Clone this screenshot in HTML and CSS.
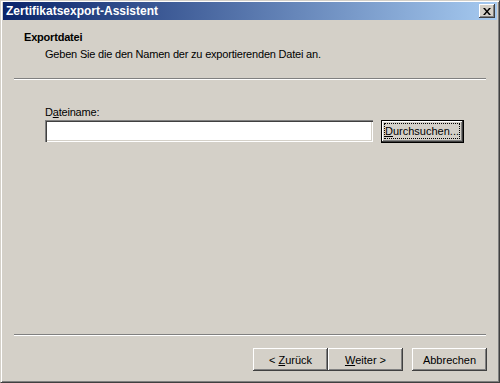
FILE: index.html
```html
<!DOCTYPE html>
<html lang="de">
<head>
    <meta charset="UTF-8">
    <title>Zertifikatsexport-Assistent</title>
    <link rel="stylesheet" href="styles.css">
</head>
<body>
    <div class="window">
        <div class="titlebar">
            <span class="title">Zertifikatsexport-Assistent</span>
            <button class="close" type="button">
                <svg width="8" height="7" viewBox="0 0 8 7"><path d="M0 0h2l2 2.5L6 0h2L5 3.5 8 7H6L4 4.5 2 7H0l3-3.5z" fill="#000"/></svg>
            </button>
        </div>
        <div class="header">
            <div class="heading">Exportdatei</div>
            <div class="subheading">Geben Sie die den Namen der zu exportierenden Datei an.</div>
        </div>
        <div class="sep"></div>
        <div class="content">
            <label class="label" for="file">D<u>a</u>teiname:</label>
            <div class="row">
                <input class="field" id="file" type="text">
                <button class="btn browse" type="button"><span class="focus"><u>D</u>urchsuchen...</span></button>
            </div>
        </div>
        <div class="sep"></div>
        <div class="footer">
            <div class="pair">
                <button class="btn" type="button">&lt; <u>Z</u>urück</button>
                <button class="btn" type="button"><u>W</u>eiter &gt;</button>
            </div>
            <button class="btn" type="button">Abbrechen</button>
        </div>
    </div>
</body>
</html>
```

FILE: styles.css
```css
body {
    margin: 0;
    background: #d4d0c8;
    font-family: Tahoma, "Liberation Sans", sans-serif;
    font-size: 11px;
    letter-spacing: -0.2px;
    color: #000;
}

.window {
    width: 500px;
    height: 383px;
    box-sizing: border-box;
    background: #d4d0c8;
    border-top: 1px solid #d4d0c8;
    border-left: 1px solid #d4d0c8;
    border-right: 1px solid #404040;
    border-bottom: 1px solid #404040;
    box-shadow: inset 1px 1px 0 #fff, inset -1px -1px 0 #808080;
    padding: 1px 2px 2px 2px;
    display: flex;
    flex-direction: column;
}

.titlebar {
    height: 18px;
    flex: none;
    background: linear-gradient(to right, #0a246a, #a6caf0);
    display: flex;
    align-items: center;
    justify-content: space-between;
    padding: 0 2px 0 3px;
}

.title {
    color: #fff;
    font-weight: bold;
    font-size: 12px;
    letter-spacing: 0;
}

.close {
    width: 16px;
    height: 14px;
    padding: 0;
    background: #d4d0c8;
    border: none;
    box-shadow: inset -1px -1px 0 #404040, inset 1px 1px 0 #fff, inset -2px -2px 0 #808080;
    display: flex;
    align-items: center;
    justify-content: center;
}

.header {
    padding: 10px 0 0 21px;
    flex: none;
}

.heading {
    font-weight: bold;
    height: 15px;
    line-height: 15px;
}

.subheading {
    padding-left: 21px;
    height: 15px;
    line-height: 15px;
    margin-top: 2px;
}

.sep {
    margin: 0 11px;
    height: 0;
    flex: none;
    border-top: 1px solid #808080;
    border-bottom: 1px solid #fff;
}

.header + .sep {
    margin-top: 16px;
}

.content {
    flex: 1;
    padding: 26px 0 0 42px;
}

.label {
    display: block;
    height: 13px;
    line-height: 13px;
    margin-bottom: 1px;
}

.row {
    display: flex;
    align-items: flex-start;
    gap: 9px;
}

.field {
    width: 328px;
    height: 22px;
    box-sizing: border-box;
    margin: 0;
    padding: 2px 3px;
    background: #fff;
    border: none;
    box-shadow: inset 1px 1px 0 #808080, inset 2px 2px 0 #404040, inset -1px -1px 0 #fff, inset -2px -2px 0 #d4d0c8;
    font: inherit;
}

.btn {
    width: 75px;
    height: 23px;
    margin: 0;
    padding: 0;
    background: #d4d0c8;
    border: none;
    box-shadow: inset -1px -1px 0 #404040, inset 1px 1px 0 #fff, inset -2px -2px 0 #808080;
    font: inherit;
    color: #000;
}

.browse {
    width: 81px;
    height: 21px;
    margin-top: 1px;
    padding: 2px 3px 3px 2px;
    box-shadow: 0 0 0 1px #000, inset -1px -1px 0 #404040, inset 1px 1px 0 #fff, inset -2px -2px 0 #808080;
}

.focus {
    display: block;
    height: 100%;
    box-sizing: border-box;
    border: 1px dotted #000;
    line-height: 14px;
}

.footer {
    flex: none;
    height: 44px;
    display: flex;
    justify-content: flex-end;
    align-items: flex-start;
    gap: 9px;
    padding: 12px 10px 0 0;
    box-sizing: border-box;
}

.pair {
    display: flex;
}
```
